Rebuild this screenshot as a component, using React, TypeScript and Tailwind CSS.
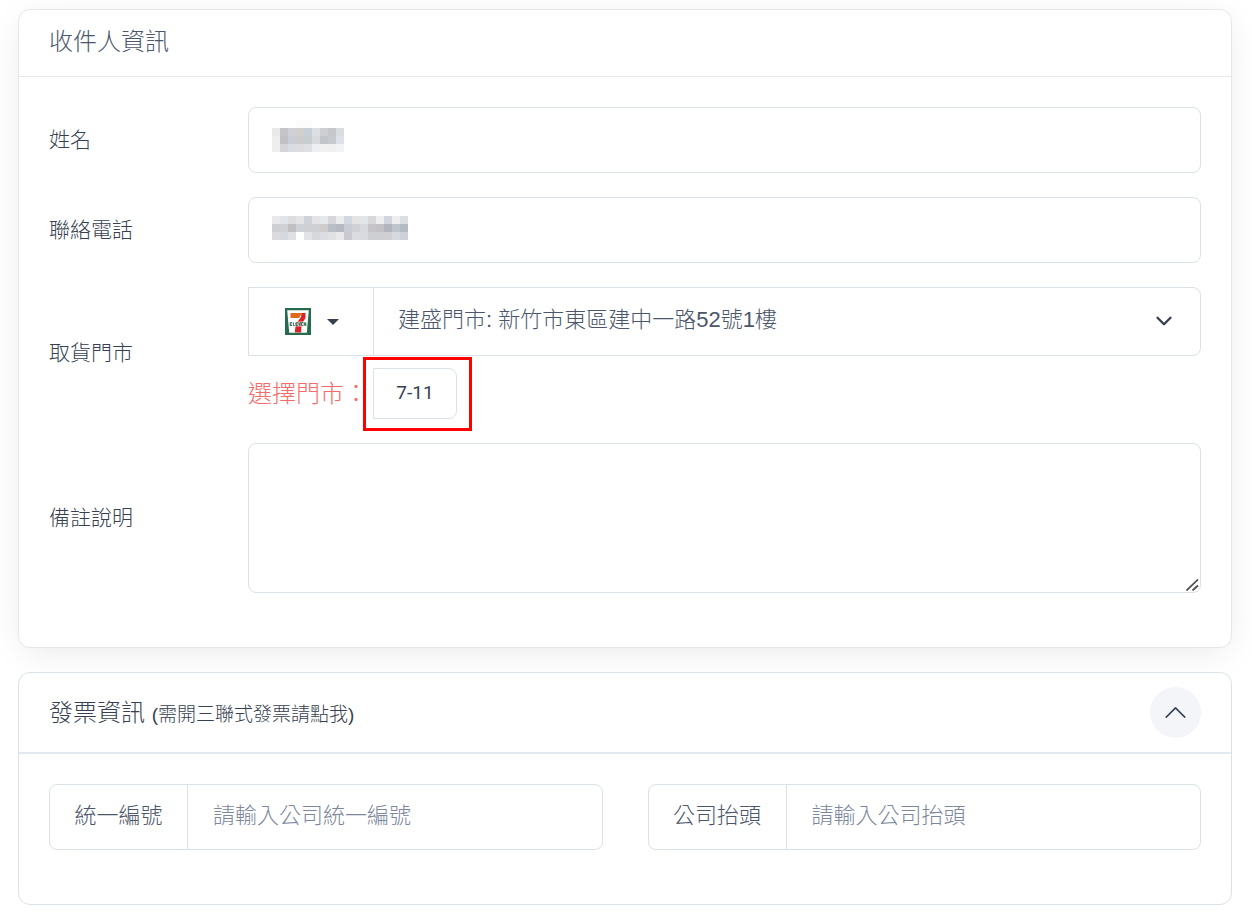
import { useState } from 'react'
import type { ReactNode } from 'react'
import { ChevronDown, ChevronUp } from 'lucide-react'

const NAME_MOSAIC = [
  ['', '', '', '#fcfcfc', '#fcfcfc', '', '', '', ''],
  ['#e9e9ea', '#c5c5c9', '#ced2d6', '#d3cfcf', '#c9cfd8', '#dde0e3', '#cfcfd3', '#c5c7cb', '#d9dce1'],
  ['#eeeeef', '#c1c0c4', '#c9cdd7', '#cdcccd', '#c8cdcf', '#d9dadd', '#c2c5c9', '#c9cace', '#dee1e7'],
  ['#eeeeee', '#d5d5d9', '#d8dce3', '#dddde0', '#dfe0e3', '#eeeff3', '#f1f1f2', '#f0f0f1', '#f2f3f5'],
]

const PHONE_MOSAIC = [
  ['#e9e9ea', '#e1e4e8', '#dddcdf', '#e4e4e6', '#ced2da', '#e4e4e6', '#e5e9eb', '#d7d7d9', '#ebecee', '#d3d7e0', '#e4e4e5', '#e2e6e8', '#d8d8da', '#eeeeef', '#d1d5dd', '#eeeeee', '#dcdfe2'],
  ['#cfcfd3', '#d0d1d5', '#c0c0c3', '#ccd2d6', '#cfd0d4', '#d0d0d3', '#cfcccc', '#b9bec7', '#b6b9c1', '#c9ccd5', '#d0d0d5', '#d7d9df', '#c5c4c8', '#c3c1c6', '#b0b5be', '#bec5cd', '#b5bbc4'],
  ['#dbdbdd', '#d5d8de', '#e0e0e2', '#fdfefe', '#e2e3e7', '#d8d8da', '#dadde1', '#e0e1e3', '#e9e9ea', '#c9c9cf', '#dadce0', '#d8dadf', '#cecfd2', '#cfcfd1', '#d0d0d4', '#d6d9df', '#ced1da'],
]

function Mosaic({ rows }: { rows: string[][] }) {
  const width = rows[0].length * 8
  const height = rows.length * 8
  return (
    <svg width={width} height={height} shapeRendering="crispEdges" aria-hidden="true">
      {rows.map((row, y) =>
        row.map((fill, x) =>
          fill ? <rect key={`${x}-${y}`} x={x * 8} y={y * 8} width="8" height="8" fill={fill} /> : null
        )
      )}
    </svg>
  )
}

function SevenElevenLogo() {
  return (
    <svg width="26" height="27" viewBox="0 0 26 27" aria-hidden="true">
      <rect width="26" height="27" fill="#266b4b" />
      <path d="M2.200 2.200h21.600L21.800 24.800H4.200z" fill="#fff" />
      <path d="M5.500 5h11.500l-3 5H5.500z" fill="#e06a1b" />
      <path d="M16.500 5H20.500v5c-1.500 2.500-3 4-3.500 6.500-.5 2-1 5-.8 8H10c-.2-4.500.8-7.500 2.500-10.500 1.500-2.500 3-4 3.500-5z" fill="#dc2128" />
      <rect x="4.300" y="13.500" width="17" height="5" fill="#fff" fillOpacity="0.700" />
      <path
        d="M7 14.600H5.200v3H7M5.200 16.100h1.500M8.300 14.300v3.300h1.500M12.700 14.600h-1.800v3h1.800M10.900 16.100h1.500M13.700 14.300l1 3.200 1-3.200M18.200 14.600h-1.500v3h1.500M19.200 17.900v-3.400l1.600 3.200v-3.400"
        fill="none"
        stroke="#1c5c3f"
        strokeWidth="0.900"
      />
    </svg>
  )
}

function FormRow({ id, label, children }: { id: string; label: string; children: ReactNode }) {
  return (
    <div className="grid grid-cols-[199px_1fr] items-center">
      <label htmlFor={id} className="pb-px text-[21px] leading-8 text-[#373f50]">
        {label}
      </label>
      {children}
    </div>
  )
}

function InputGroup({ id, label, placeholder }: { id: string; label: string; placeholder: string }) {
  return (
    <div className="flex h-[66px] rounded-lg border border-[#dae1e7]">
      <label
        htmlFor={id}
        className="flex w-[138px] shrink-0 items-center justify-center border-r border-[#dae1e7] pb-1 text-[22px] text-[#4b566b]"
      >
        {label}
      </label>
      <input
        id={id}
        placeholder={placeholder}
        className="min-w-0 flex-1 rounded-r-lg bg-transparent px-[25px] pb-1 text-[22px] text-[#4b566b] outline-none placeholder:text-[#7d879c]"
      />
    </div>
  )
}

export default function App() {
  const [open, setOpen] = useState(true)

  return (
    <main className="flex flex-col gap-6 bg-white pt-[9px] pr-5 pb-2.5 pl-[18px] font-['Liberation_Sans','Noto_Sans_CJK_TC',sans-serif] font-light">
      <section className="rounded-xl border border-[#e6e7e9] bg-white shadow-[0_7px_36px_-6px_rgba(0,0,0,0.1)]">
        <h2 className="flex h-[67px] items-center border-b border-[#e6e7e9] px-[30px] pb-0.5 text-2xl text-[#4b566b]">
          收件人資訊
        </h2>
        <form className="flex flex-col gap-6 px-[30px] pt-[30px] pb-[54px]">
          <FormRow id="name" label="姓名">
            <div className="relative">
              <input
                id="name"
                className="block h-[66px] w-full rounded-lg border border-[#dae1e7] px-6 text-[22px] outline-none"
              />
              <div className="pointer-events-none absolute top-[13px] left-6">
                <Mosaic rows={NAME_MOSAIC} />
              </div>
            </div>
          </FormRow>

          <FormRow id="phone" label="聯絡電話">
            <div className="relative">
              <input
                id="phone"
                type="tel"
                className="block h-[66px] w-full rounded-lg border border-[#dae1e7] px-6 text-[22px] outline-none"
              />
              <div className="pointer-events-none absolute top-[19px] left-6">
                <Mosaic rows={PHONE_MOSAIC} />
              </div>
            </div>
          </FormRow>

          <FormRow id="store" label="取貨門市">
            <div className="flex flex-col gap-3">
              <div className="flex h-[69px] rounded-r-lg border border-[#dae1e7]">
                <button
                  type="button"
                  aria-label="7-11"
                  className="flex w-[125px] shrink-0 items-center justify-end gap-4 border-r border-[#dae1e7] pr-[34px]"
                >
                  <SevenElevenLogo />
                  <svg width="12" height="6" viewBox="0 0 12 6" aria-hidden="true">
                    <path d="M0 0h12L6 6z" fill="#373f50" />
                  </svg>
                </button>
                <div className="relative min-w-0 flex-1">
                  <select
                    id="store"
                    className="size-full appearance-none rounded-r-lg bg-transparent pr-16 pb-1 pl-6 text-[22px] text-[#4b566b] outline-none"
                  >
                    <option>建盛門市: 新竹市東區建中一路52號1樓</option>
                  </select>
                  <ChevronDown
                    className="pointer-events-none absolute top-5 right-[23px] text-[#373f50]"
                    size={26}
                    strokeWidth={2.2}
                  />
                </div>
              </div>
              <div className="flex items-center gap-[5px]">
                <span className="text-2xl text-[#f66a6a]">選擇門市：</span>
                <div className="relative">
                  <button
                    type="button"
                    className="block h-[51px] w-[84px] rounded-r-lg border border-[#dae1e7] font-['Roboto',sans-serif] text-[19px] font-normal text-[#373f50]"
                  >
                    7-11
                  </button>
                  <div className="pointer-events-none absolute -top-[11px] -right-[15px] -bottom-3 -left-2.5 border-3 border-[#ff0000]" />
                </div>
              </div>
            </div>
          </FormRow>

          <FormRow id="note" label="備註說明">
            <div className="relative">
              <textarea
                id="note"
                className="block h-[150px] w-full resize-none rounded-lg border border-[#dae1e7] px-6 py-4 text-[22px] outline-none"
              />
              <svg
                className="pointer-events-none absolute right-0.5 bottom-0.5"
                width="13"
                height="12"
                viewBox="0 0 13 12"
                aria-hidden="true"
              >
                <path d="M.5 11.500L12 .5M6.500 11.500l5.500-5" stroke="#4a4a4a" strokeWidth="1.700" fill="none" />
              </svg>
            </div>
          </FormRow>
        </form>
      </section>

      <section className="rounded-xl border border-[#dae1e7] bg-white">
        <div className="flex h-[81px] items-center justify-between border-b-2 border-[#e3e9ef] px-[30px]">
          <h2 className="text-2xl text-[#373f50]">
            發票資訊 <small className="text-[19px]">(需開三聯式發票請點我)</small>
          </h2>
          <button
            type="button"
            aria-label="發票資訊"
            aria-expanded={open}
            onClick={() => setOpen(!open)}
            className="flex size-[51px] items-center justify-center rounded-full bg-[#f3f5f9] text-[#373f50]"
          >
            {open ? <ChevronUp size={37} strokeWidth={1} /> : <ChevronDown size={37} strokeWidth={1} />}
          </button>
        </div>
        {open && (
          <div className="grid grid-cols-2 gap-[45px] px-[30px] pt-[30px] pb-[54px]">
            <InputGroup id="tax-id" label="統一編號" placeholder="請輸入公司統一編號" />
            <InputGroup id="company" label="公司抬頭" placeholder="請輸入公司抬頭" />
          </div>
        )}
      </section>
    </main>
  )
}
